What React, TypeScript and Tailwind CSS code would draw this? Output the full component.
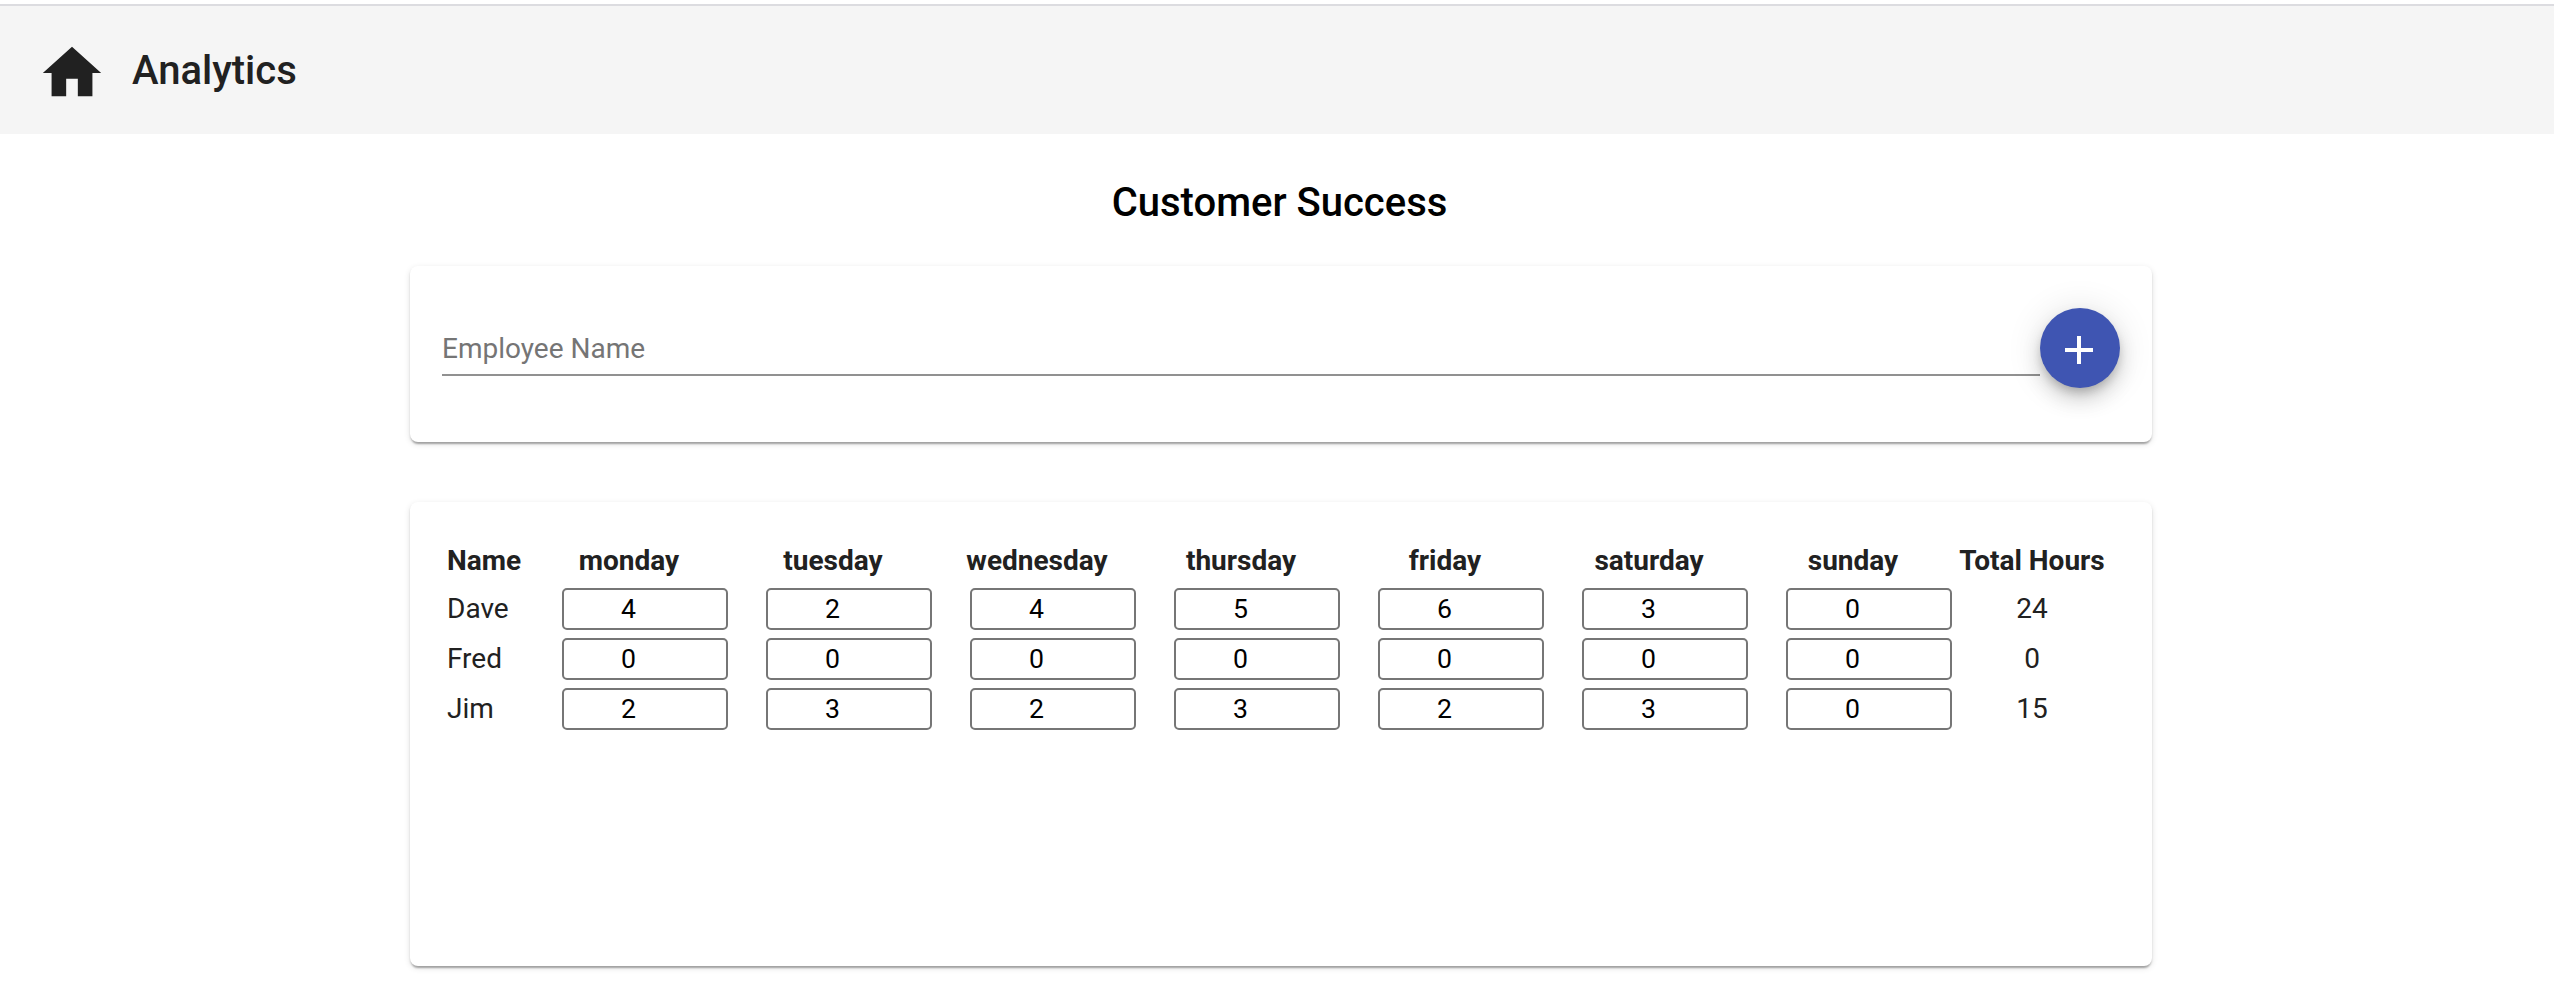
const DAYS = ["monday", "tuesday", "wednesday", "thursday", "friday", "saturday", "sunday"];

const EMPLOYEES = [
  { name: "Dave", hours: [4, 2, 4, 5, 6, 3, 0] },
  { name: "Fred", hours: [0, 0, 0, 0, 0, 0, 0] },
  { name: "Jim", hours: [2, 3, 2, 3, 2, 3, 0] },
];

const CARD =
  "w-[1742px] rounded-lg bg-white shadow-[0_4px_2px_-2px_rgba(0,0,0,0.2),0_2px_2px_0_rgba(0,0,0,0.14),0_2px_6px_0_rgba(0,0,0,0.12)]";
const ROW = "grid grid-cols-[79px_repeat(7,200px)_150px] gap-x-1";

function Toolbar() {
  return (
    <header className="flex h-32 items-center bg-[#f5f5f5] pl-[37px] text-[#212121]">
      <svg viewBox="0 0 24 24" className="mt-1.5 size-[70px] fill-current">
        <path d="M10 20v-6h4v6h5v-8h3L12 3 2 12h3v8z" />
      </svg>
      <h1 className="mt-0.5 ml-[25px] text-[40px] leading-[64px] font-medium">Analytics</h1>
    </header>
  );
}

function AddEmployee() {
  return (
    <section className={`${CARD} flex h-44 items-start px-8 pt-[42px]`}>
      <div className="h-[68px] flex-1 border-b-2 border-[#919191] pt-[25px] text-[28px] leading-8 text-[#757575]">
        Employee Name
      </div>
      <button
        aria-label="Add employee"
        className="flex size-20 items-center justify-center rounded-full bg-[#3f55b2] shadow-[0_6px_10px_-2px_rgba(0,0,0,0.2),0_12px_20px_0_rgba(0,0,0,0.14),0_2px_36px_0_rgba(0,0,0,0.12)]"
      >
        <svg viewBox="0 0 28 28" className="mt-1 mr-0.5 size-7 fill-white">
          <path d="M12 0h4v12h12v4H16v12h-4V16H0v-4h12z" />
        </svg>
      </button>
    </section>
  );
}

function Timesheet() {
  return (
    <section className={`${CARD} mt-[60px] h-[464px] px-9 pt-10 text-[28px] text-[#212121]`}>
      <div className={`${ROW} h-[42px] text-center leading-[38px] font-bold`}>
        <span className="pl-px text-left">Name</span>
        {DAYS.map((day) => (
          <span key={day}>{day}</span>
        ))}
        <span>Total Hours</span>
      </div>
      {EMPLOYEES.map((employee) => (
        <div key={employee.name} className={`${ROW} h-[50px] items-center`}>
          <span className="pl-px leading-[42px]">{employee.name}</span>
          {employee.hours.map((value, i) => (
            <div
              key={DAYS[i]}
              className="ml-[33px] h-[42px] w-[166px] rounded-[5px] border-2 border-[#767676] pr-[33px] text-center text-[26.67px] leading-[38px] text-black"
            >
              {value}
            </div>
          ))}
          <span className="text-center leading-[42px]">
            {employee.hours.reduce((sum, value) => sum + value, 0)}
          </span>
        </div>
      ))}
    </section>
  );
}

export default function App() {
  return (
    <div className="h-[990px] overflow-hidden bg-white pt-1 font-[Roboto,sans-serif]">
      <div className="h-0.5 bg-[#dcdce0]" />
      <Toolbar />
      <main className="flex flex-col items-center pl-2">
        <h2 className="mt-[37px] mr-[3px] mb-[31px] text-[40px] leading-[64px] font-medium text-black">
          Customer Success
        </h2>
        <AddEmployee />
        <Timesheet />
      </main>
    </div>
  );
}
